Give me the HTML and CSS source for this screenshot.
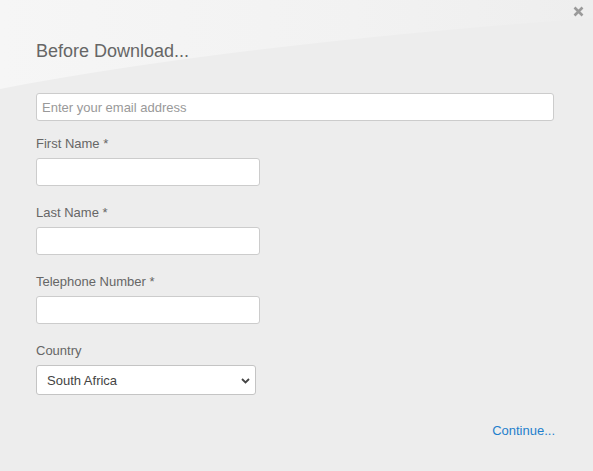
FILE: index.html
```html
<!DOCTYPE html>
<html>
<head>
<meta charset="utf-8">
<link rel="stylesheet" href="styles.css">
</head>
<body>
<div class="dialog">
  <svg class="sheen" width="593" height="100" viewBox="0 0 593 100" aria-hidden="true">
    <defs>
      <linearGradient id="sh" x1="0" y1="0" x2="1" y2="0">
        <stop offset="0" stop-color="#f6f6f6"/>
        <stop offset="0.6" stop-color="#f2f2f2"/>
        <stop offset="1" stop-color="#eeeeee"/>
      </linearGradient>
    </defs>
    <path d="M0,89 Q230,45 593,18 L593,0 L0,0 Z" fill="url(#sh)"/>
  </svg>
  <button class="close" aria-label="Close">
    <svg width="11" height="11" viewBox="0 0 11 11"><path d="M1.5,1.5 L9.5,9.5 M9.5,1.5 L1.5,9.5" stroke="#9a9a9a" stroke-width="2.6" stroke-linecap="butt"/></svg>
  </button>
  <div class="content">
    <h1 class="title">Before Download...</h1>
    <input class="field email" type="text" placeholder="Enter your email address">
    <label class="label">First Name *</label>
    <input class="field short" type="text">
    <label class="label">Last Name *</label>
    <input class="field short" type="text">
    <label class="label">Telephone Number *</label>
    <input class="field short" type="text">
    <label class="label">Country</label>
    <div class="select-wrap">
      <select class="select">
        <option>South Africa</option>
      </select>
      <svg class="chev" width="9" height="6" viewBox="0 0 9 6"><path d="M1,1 L4.5,4.5 L8,1" fill="none" stroke="#444" stroke-width="1.8"/></svg>
    </div>
    <div class="actions"><a class="continue" href="#">Continue...</a></div>
  </div>
</div>
</body>
</html>
```

FILE: styles.css
```css
html, body {
  margin: 0;
  padding: 0;
  background: #ededed;
}
.dialog {
  position: relative;
  width: 593px;
  height: 471px;
  background: #ededed;
  overflow: hidden;
  font-family: "Liberation Sans", Arial, sans-serif;
  color: #666;
}
.sheen {
  position: absolute;
  left: 0;
  top: 0;
  display: block;
}
.close {
  position: absolute;
  top: 5px;
  left: 572px;
  width: 12px;
  height: 12px;
  padding: 0;
  border: 0;
  background: transparent;
  display: flex;
  align-items: center;
  justify-content: center;
}
.content {
  position: relative;
  padding: 41px 38px 0 36px;
  display: flex;
  flex-direction: column;
  align-items: flex-start;
}
.title {
  margin: 0 0 31px 0;
  font-size: 18px;
  line-height: 21px;
  font-weight: normal;
  color: #666;
}
.field {
  box-sizing: border-box;
  height: 28px;
  margin: 0 0 18px 0;
  padding: 0 5px;
  border: 1px solid #cccccc;
  border-radius: 3px;
  background: #fff;
  font-family: "Liberation Sans", Arial, sans-serif;
  font-size: 13px;
  color: #333;
  outline: none;
}
.field::placeholder {
  color: #999;
}
.email {
  width: 518px;
  margin-bottom: 14px;
}
.short {
  width: 224px;
}
.label {
  display: block;
  font-size: 13px;
  line-height: 15px;
  padding-top: 1px;
  margin-bottom: 7px;
  color: #666;
}
.select-wrap {
  position: relative;
  width: 220px;
  height: 30px;
}
.select {
  appearance: none;
  -webkit-appearance: none;
  box-sizing: border-box;
  width: 220px;
  height: 30px;
  margin: 0;
  padding: 0 0 0 10px;
  border: 1px solid #c4c4c4;
  border-radius: 3px;
  background: #fff;
  font-family: "Liberation Sans", Arial, sans-serif;
  font-size: 13px;
  color: #444;
  outline: none;
}
.chev {
  position: absolute;
  left: 205px;
  top: 13px;
  pointer-events: none;
}
.actions {
  align-self: stretch;
  display: flex;
  justify-content: flex-end;
  margin-top: 28px;
}
.continue {
  font-size: 13px;
  line-height: 15px;
  color: #1f7fcc;
  text-decoration: none;
}
```
